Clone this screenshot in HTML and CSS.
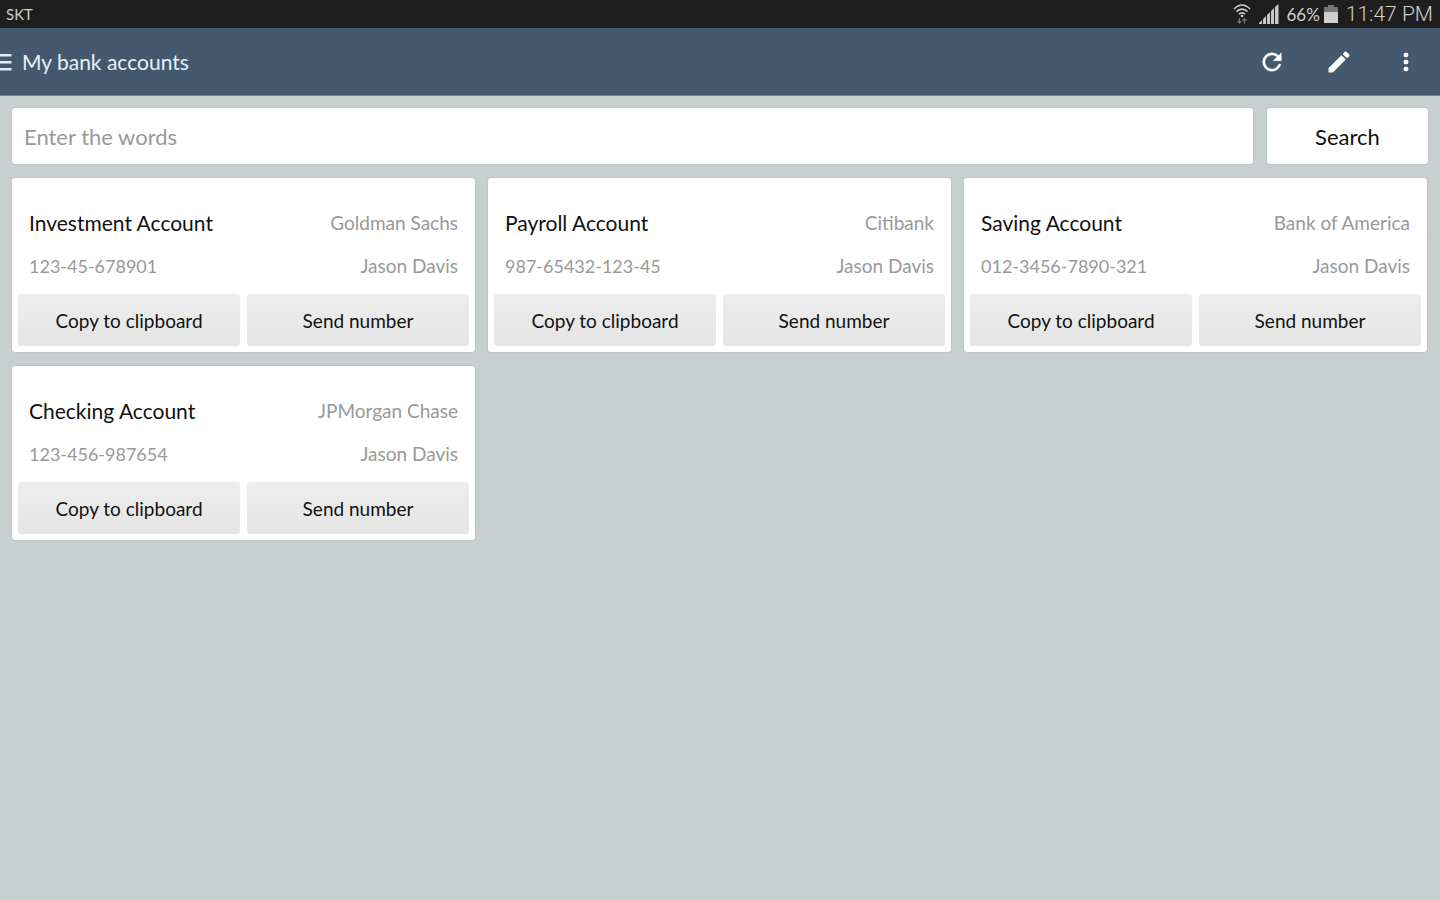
FILE: index.html
```
<!DOCTYPE html>
<html lang="en">
<head>
    <meta charset="UTF-8">
    <meta name="viewport" content="width=device-width, initial-scale=1.0">
    <title>My bank accounts</title>
    <link rel="stylesheet" href="styles.css">
</head>
<body>
    <!-- Status bar -->
    <div class="status-bar">
        <span class="carrier">SKT</span>
        <div class="status-icons">
            <svg class="wifi" width="18" height="22" viewBox="0 0 18 22" fill="none" stroke="#d0d0d0" stroke-width="1.6">
                <path d="M1 6Q9 -2 17 6M3.500 8.700Q9 3.500 14.500 8.700M6 11.200Q9 8.500 12 11.200"/>
                <circle cx="9" cy="13" r="1.300" fill="#d0d0d0" stroke="none"/>
                <path d="M6.500 15v5M4.500 18l2 2 2-2M11.500 20.500v-5M9.500 17.500l2-2 2 2" stroke="#777" stroke-width="1.200"/>
            </svg>
            <svg class="signal" width="20" height="20" viewBox="0 0 20 20" fill="#c8c8c8">
                <path d="M0 20v-1l3-3v4zM4 20v-5l3-3v8zM8 20v-9l3-3v12zM12 20V7l3-3v16zM16 20V3l3.500-3v20z"/>
            </svg>
            <span class="battery-level">66%</span>
            <svg class="battery" width="14" height="18" viewBox="0 0 14 18">
                <path fill="#777" d="M4 0h6v2h4v6H0V2h4z"/>
                <path fill="#d0d0d0" d="M0 7h14v11H0z"/>
            </svg>
            <span class="clock">11:47 PM</span>
        </div>
    </div>

    <!-- App bar -->
    <header class="app-bar">
        <button class="menu-btn" aria-label="Menu">
            <svg width="12" height="18" viewBox="0 0 12 18" fill="#e4edf3">
                <path d="M0 1h11.500v2.500H0zM0 8h11.500v2.500H0zM0 15h11.500v2.500H0z"/>
            </svg>
        </button>
        <h1>My bank accounts</h1>
        <div class="actions">
            <button class="icon-btn" aria-label="Refresh">
                <svg width="28" height="28" viewBox="0 0 24 24" fill="#fff" stroke="#fff" stroke-width=".3">
                    <path d="M17.650 6.350A7.950 7.950 0 0 0 12 4a8 8 0 1 0 7.730 10h-2.080A6 6 0 1 1 12 6c1.660 0 3.140.690 4.220 1.780L13 11h7V4z"/>
                </svg>
            </button>
            <button class="icon-btn" aria-label="Edit">
                <svg width="28" height="28" viewBox="0 0 24 24" fill="#fff">
                    <path d="M3 17.250V21h3.750L17.810 9.940l-3.750-3.750zM20.710 7.040a1 1 0 0 0 0-1.410l-2.340-2.340a1 1 0 0 0-1.410 0l-1.830 1.830 3.750 3.750z"/>
                </svg>
            </button>
            <button class="icon-btn" aria-label="More options">
                <svg width="28" height="28" viewBox="0 0 24 24" fill="#fff">
                    <rect x="10" y="4" width="4" height="4" rx="1.500"/>
                    <rect x="10" y="10" width="4" height="4" rx="1.500"/>
                    <rect x="10" y="16" width="4" height="4" rx="1.500"/>
                </svg>
            </button>
        </div>
    </header>

    <main>
        <form class="search">
            <input type="text" class="search-input" placeholder="Enter the words" aria-label="Enter the words">
            <button type="button" class="search-btn">Search</button>
        </form>

        <!-- Accounts -->
        <div class="accounts">
            <section class="card">
                <div class="row">
                    <h2>Investment Account</h2>
                    <span>Goldman Sachs</span>
                </div>
                <div class="row">
                    <span class="number">123-45-678901</span>
                    <span>Jason Davis</span>
                </div>
                <div class="card-buttons">
                    <button class="btn">Copy to clipboard</button>
                    <button class="btn">Send number</button>
                </div>
            </section>
            <section class="card">
                <div class="row">
                    <h2>Payroll Account</h2>
                    <span>Citibank</span>
                </div>
                <div class="row">
                    <span class="number">987-65432-123-45</span>
                    <span>Jason Davis</span>
                </div>
                <div class="card-buttons">
                    <button class="btn">Copy to clipboard</button>
                    <button class="btn">Send number</button>
                </div>
            </section>
            <section class="card">
                <div class="row">
                    <h2>Saving Account</h2>
                    <span>Bank of America</span>
                </div>
                <div class="row">
                    <span class="number">012-3456-7890-321</span>
                    <span>Jason Davis</span>
                </div>
                <div class="card-buttons">
                    <button class="btn">Copy to clipboard</button>
                    <button class="btn">Send number</button>
                </div>
            </section>
            <section class="card">
                <div class="row">
                    <h2>Checking Account</h2>
                    <span>JPMorgan Chase</span>
                </div>
                <div class="row">
                    <span class="number">123-456-987654</span>
                    <span>Jason Davis</span>
                </div>
                <div class="card-buttons">
                    <button class="btn">Copy to clipboard</button>
                    <button class="btn">Send number</button>
                </div>
            </section>
        </div>
    </main>
</body>
</html>
```
FILE: styles.css
```
* {
    box-sizing: border-box;
}
body {
    margin: 0;
    background-color: #c8cfcf;
    color: #111;
    font-family: Lato, "Open Sans", sans-serif;
}
button, input {
    font-family: inherit;
    border: none;
}
button {
    color: inherit;
    cursor: pointer;
}
svg {
    display: block;
}

/* Status bar */
.status-bar {
    display: flex;
    justify-content: space-between;
    align-items: center;
    height: 28px;
    padding: 0 7px 0 6px;
    background-color: #1e1e1e;
    color: #d0d0d0;
}
.carrier {
    font-size: 15px;
}
.status-icons {
    display: flex;
    align-items: center;
}
.signal {
    margin: 0 7px 0 8px;
}
.battery-level {
    font-size: 17px;
}
.battery {
    margin: 0 8px 0 4px;
}
.clock {
    font-family: Roboto, sans-serif;
    font-size: 21px;
    font-weight: 300;
}

/* App bar */
.app-bar {
    display: flex;
    align-items: center;
    height: 68px;
    border-bottom: 1px solid #6f8291;
    background-color: #44596d;
    color: #e4f1f8;
}
.app-bar h1 {
    flex: 1;
    margin: 0;
    font-size: 21px;
    font-weight: 400;
}
.menu-btn {
    padding: 0;
    margin-right: 10px;
    background: none;
}
.actions {
    display: flex;
    padding-right: 1px;
}
.icon-btn {
    display: flex;
    justify-content: center;
    align-items: center;
    width: 67px;
    height: 67px;
    padding: 0;
    background: none;
}

/* Search */
main {
    padding: 12px;
}
.search {
    display: flex;
    gap: 14px;
    margin-bottom: 14px;
}
.search-input, .search-btn {
    height: 56px;
    border-radius: 3px;
    background-color: #fff;
    box-shadow: 0 0 2px #a4afb9;
    font-size: 22px;
}
.search-input {
    flex: 1;
    min-width: 0;
    padding: 0 12px;
}
.search-input::placeholder {
    color: #999;
}
.search-btn {
    width: 161px;
}

/* Account cards */
.accounts {
    display: grid;
    grid-template-columns: repeat(3, 1fr);
    gap: 14px 13px;
    margin-right: 1px;
}
.card {
    padding: 23px 6px 6px;
    border-radius: 3px;
    background-color: #fff;
    box-shadow: 0 0 2px #a4afb9;
}
.row {
    display: flex;
    justify-content: space-between;
    align-items: center;
    height: 43px;
    padding: 0 11px;
    color: #999;
    font-size: 19px;
}
.row h2 {
    margin: 0;
    color: #111;
    font-size: 21px;
    font-weight: 400;
}
.number {
    font-size: 18px;
}
.card-buttons {
    display: grid;
    grid-template-columns: 1fr 1fr;
    gap: 7px;
    padding-top: 7px;
}
.btn {
    height: 52px;
    border-radius: 3px;
    background: linear-gradient(#ededed, #e5e5e5);
    font-size: 19px;
}
```
